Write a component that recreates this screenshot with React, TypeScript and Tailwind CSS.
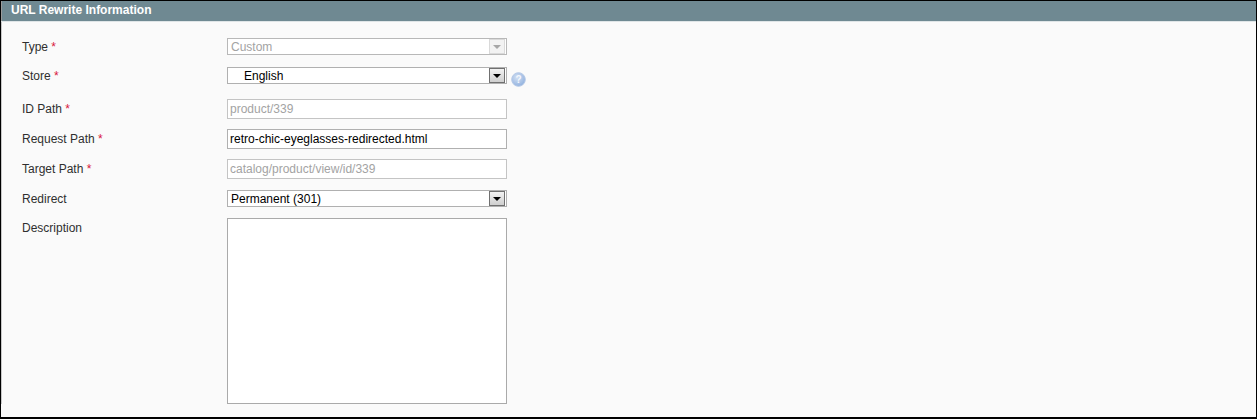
const Req = () => <span className="text-[#d8173a]"> *</span>;

const Arrow = ({ disabled }: { disabled?: boolean }) => (
  <span
    className={`flex h-[15px] w-[16px] items-center justify-center border ${
      disabled ? 'border-[#d9d9d9] bg-[#f2f2f2]' : 'border-[#707070] bg-gradient-to-b from-[#f2f2f2] to-[#cfcfcf]'
    }`}
  >
    <svg width="8" height="4" viewBox="0 0 8 4">
      <path d="M0 0h8L4 4z" fill={disabled ? '#a6a6a6' : '#000'} />
    </svg>
  </span>
);

const Select = ({ value, disabled, indent }: { value: string; disabled?: boolean; indent?: boolean }) => (
  <div
    className={`flex h-[17px] w-[280px] items-center justify-between border bg-white pr-px ${
      disabled ? 'border-[#b8b8b8] text-[#a3a3a3]' : 'border-[#b0b0b0] text-black'
    } ${indent ? 'pl-[16px]' : 'pl-[3px]'}`}
  >
    <span>{value}</span>
    <Arrow disabled={disabled} />
  </div>
);

const Input = ({ value, disabled }: { value: string; disabled?: boolean }) => (
  <div
    className={`flex h-[20px] w-[280px] items-center border bg-white pl-[2px] ${
      disabled ? 'border-[#c4c4c4] text-[#a3a3a3]' : 'border-[#b0b0b0] text-black'
    }`}
  >
    {value}
  </div>
);

const Row = ({ label, required, className, labelClass, children }: { label: string; required?: boolean; className?: string; labelClass: string; children: React.ReactNode }) => (
  <div className={`flex ${className ?? ''}`}>
    <div className={`w-[205px] shrink-0 text-[#2f2f2f] ${labelClass}`}>
      {label}
      {required && <Req />}
    </div>
    {children}
  </div>
);

const HelpIcon = () => (
  <svg width="15" height="15" viewBox="0 0 15 15" className="ml-[4px] mt-[5px]">
    <defs>
      <radialGradient id="help" cx="40%" cy="35%" r="70%">
        <stop offset="0%" stopColor="#d3e0f3" />
        <stop offset="100%" stopColor="#8fb0de" />
      </radialGradient>
    </defs>
    <circle cx="7.5" cy="7.5" r="6.8" fill="url(#help)" stroke="#b4c8e6" strokeWidth="1" />
    <text x="7.5" y="11" textAnchor="middle" fontSize="10" fontWeight="700" fill="#f4f7fc" fontFamily="Liberation Sans, sans-serif">?</text>
  </svg>
);

export default function App() {
  return (
    <div className="box-border h-[419px] w-[1257px] border-t border-r border-b-2 border-l border-black bg-[#fafafa] font-['Liberation_Sans',Arial,sans-serif] text-[12px]">
      <div className="flex h-[20px] items-center border-l border-[#9a9a9a] bg-[#6f8992] pb-[2px] pl-[9px] text-[12px] font-bold text-white">
        URL Rewrite Information
      </div>
      <div className="h-px bg-[#dfe5e7]" />
      <div className="border-l border-[#c8c8c8] pl-[20px] pt-[16px]">
        <Row label="Type" required labelClass="leading-[19px]" className="h-[17px]">
          <Select value="Custom" disabled />
        </Row>
        <Row label="Store" required labelClass="leading-[19px]" className="mt-[12px] h-[17px]">
          <Select value="English" indent />
          <HelpIcon />
        </Row>
        <Row label="ID Path" required labelClass="leading-[21px]" className="mt-[15px] h-[20px]">
          <Input value="product/339" disabled />
        </Row>
        <Row label="Request Path" required labelClass="leading-[21px]" className="mt-[10px] h-[20px]">
          <Input value="retro-chic-eyeglasses-redirected.html" />
        </Row>
        <Row label="Target Path" required labelClass="leading-[21px]" className="mt-[10px] h-[20px]">
          <Input value="catalog/product/view/id/339" disabled />
        </Row>
        <Row label="Redirect" labelClass="leading-[19px]" className="mt-[11px] h-[17px]">
          <Select value="Permanent (301)" />
        </Row>
        <Row label="Description" labelClass="leading-[21px]" className="mt-[11px]">
          <div className="h-[186px] w-[280px] border border-[#aaaaaa] bg-white" />
        </Row>
      </div>
    </div>
  );
}
